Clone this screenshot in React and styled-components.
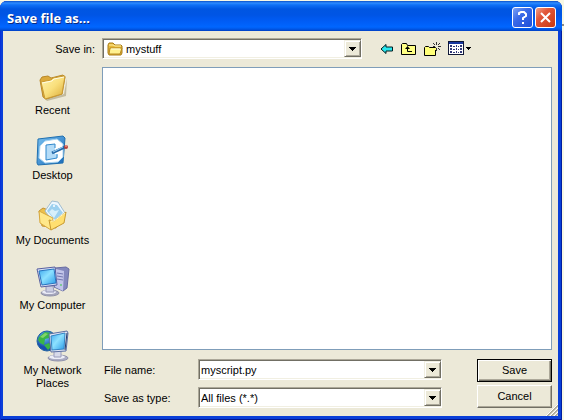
import React from "react";
import styled, { createGlobalStyle } from "styled-components";

const Global = createGlobalStyle`
  * { box-sizing: border-box; }
  body {
    margin: 0;
    background: #f8f8e4;
    font: 11px/13px "Liberation Sans", Arial, sans-serif;
    color: #000;
  }
  button, input, select { font: inherit; color: inherit; }
  svg { display: block; flex: none; }
`;

const Page = styled.div`
  display: flex;
  min-height: 100vh;
  padding: 1px 2px 0 0;
  background: linear-gradient(#f8f8e4 24px, #8c8c84 24px, #8c8c84 26px, #f8f8e4 26px);
`;

const Dialog = styled.main`
  flex: 1;
  display: flex;
  flex-direction: column;
  border-radius: 7px 7px 0 0;
  background: #0a3fd8;
  box-shadow: inset 1px 0 #0831d9, inset -1px 0 #001ea0, inset 0 -1px #001590;
  overflow: hidden;
`;

const TitleBar = styled.header`
  display: flex;
  align-items: center;
  gap: 2px;
  height: 30px;
  padding: 2px 6px 0 7px;
  background: linear-gradient(
    #0a50c8 0, #2e8cff 2px, #0f70f5 4px, #0056e2 8px,
    #0055e5 14px, #005cf5 20px, #0066ff 26px, #0058e8 28px, #003fc4 30px
  );
`;

const Title = styled.h1`
  flex: 1;
  margin: 0;
  padding-top: 2px;
  font: bold 13px/18px "Open Sans", "Noto Sans", sans-serif;
  color: #fff;
  text-shadow: 1px 1px #0a2a80;
`;

const CaptionButton = styled.button`
  display: grid;
  place-items: center;
  width: 21px;
  height: 21px;
  padding: 0;
  border: 1px solid #fff;
  border-radius: 3px;
  background: ${(p) =>
    p.$close
      ? "linear-gradient(135deg, #f0a088, #e2583a 35%, #c83810)"
      : "linear-gradient(135deg, #7ba2f5, #3a6ae8 40%, #1e4fd8)"};
`;

const Client = styled.form`
  flex: 1;
  display: grid;
  grid-template-columns: 99px minmax(0, 1fr);
  grid-template-rows: 21px 1fr;
  row-gap: 8px;
  margin: 0 4px 4px 3px;
  padding: 7px 0 0;
  background: #ece9d8;
`;

const LookInLabel = styled.label`
  padding: 5px 7px 0 0;
  text-align: right;
`;

const TopRow = styled.div`
  display: flex;
  align-items: center;
  gap: 18px;
  padding-right: 6px;
`;

const Combo = styled.div`
  flex: ${(p) => (p.$look ? "0 1 260px" : "1")};
  display: flex;
  align-items: center;
  min-width: 0;
  height: 21px;
  padding-left: ${(p) => (p.$look ? "4px" : "2px")};
  background: #fff;
  border: 1px solid;
  border-color: #aca899 #fff #fff #aca899;
  box-shadow: inset 1px 1px #716f64, inset -1px -1px #f1efe2;
`;

const comboField = `
  flex: 1;
  min-width: 0;
  height: 17px;
  padding: 1px 0 0;
  border: 0;
  outline: 0;
  background: transparent;
  appearance: none;
`;

const ComboSelect = styled.select`
  ${comboField}
  padding-left: ${(p) => (p.$icon ? "3px" : "0")};
`;
const ComboInput = styled.input`${comboField}`;

const DropButton = styled.button`
  display: grid;
  place-items: center;
  width: 17px;
  height: 17px;
  padding: 0;
  background: #ece9d8;
  border: 1px solid;
  border-color: #f1efe2 #716f64 #716f64 #f1efe2;
  box-shadow: inset 1px 1px #fff, inset -1px -1px #aca899;
`;

const Tools = styled.div`
  display: flex;
  align-items: center;
  gap: 7px;
`;

const ToolButton = styled.button`
  display: flex;
  padding: 0;
  border: 0;
  background: none;
`;

const Places = styled.nav`
  display: flex;
  flex-direction: column;
  gap: 2px;
`;

const Place = styled.a`
  display: flex;
  flex-direction: column;
  align-items: center;
  gap: 2px;
  min-height: 63px;
  padding-top: 3px;
  color: inherit;
  text-align: center;
  text-decoration: none;
`;

const PlaceName = styled.span`
  width: 78px;
`;

const Main = styled.div`
  display: flex;
  flex-direction: column;
  gap: 9px;
  padding-right: 6px;
`;

const FileList = styled.section`
  flex: 1;
  min-height: 120px;
  background: #fff;
  border: 1px solid #7f9db9;
`;

const Footer = styled.div`
  display: grid;
  grid-template-columns: 1fr 75px;
  column-gap: 35px;
  padding-bottom: 8px;
`;

const Fields = styled.div`
  display: flex;
  flex-direction: column;
  gap: 7px;
`;

const Field = styled.div`
  display: flex;
  align-items: center;
`;

const FieldLabel = styled.label`
  width: 96px;
  padding: 2px 0 0 2px;
`;

const Actions = styled.div`
  display: flex;
  flex-direction: column;
  gap: 3px;
`;

const PushButton = styled.button`
  height: 23px;
  padding: 0;
  background: #ece9d8;
  border: 1px solid;
  border-color: ${(p) => (p.$primary ? "#000" : "#fff #716f64 #716f64 #fff")};
  box-shadow: ${(p) =>
    p.$primary
      ? "inset 1px 1px #fff, inset -1px -1px #716f64, inset -2px -2px #aca899"
      : "inset -1px -1px #aca899"};
`;

const Grip = styled.svg`
  position: fixed;
  right: 6px;
  bottom: 4px;
`;

const Arrow = () => (
  <svg width="7" height="4" shapeRendering="crispEdges" aria-hidden="true">
    <path d="M0 0h7v1H6v1H5v1H4v1H3V3H2V2H1V1H0z" />
  </svg>
);

const SmallFolder = () => (
  <svg width="16" height="14" viewBox="0 0 16 14" aria-hidden="true">
    <path d="M1 11V3l1-2h4l2 2h6l1 1v7l-1 2H2z" fill="#e8b838" stroke="#a87c18" />
    <path d="M2 3h4l2 1h6" stroke="#fff0a0" fill="none" />
    <path d="M3 6h12l-2 6H2z" fill="#fff18f" stroke="#b88a20" />
    <path d="M4 7h9" stroke="#fffde0" />
  </svg>
);

const BackIcon = () => (
  <svg width="14" height="12" viewBox="0 0 14 12" aria-hidden="true">
    <path d="M1 6l5-4.500V4h6.500v4H6v2.500z" fill="#28e8ee" stroke="#001c20" />
  </svg>
);

const UpIcon = () => (
  <svg width="16" height="14" viewBox="0 0 16 14" aria-hidden="true">
    <path d="M.5 12.500v-10l1-1h4l1 2h8v9z" fill="#ffff84" stroke="#000" />
    <path d="M6.500 6v3.500H11" stroke="#000" fill="none" />
    <path d="M4 7l2.500-3L9 7z" />
  </svg>
);

const NewFolderIcon = () => (
  <svg width="17" height="16" viewBox="0 0 17 16" aria-hidden="true">
    <path d="M.5 14.500v-8l1-1h3l1 1h6v8z" fill="#ffff78" stroke="#000" />
    <path d="M12.500 1v3M12.500 7v3M9 5.500h2M14 5.500h3M9 2l2 2M14 4l2-2M14 7l2 2" stroke="#333" />
    <path d="M10 7h2v2h-2z" fill="#ffff78" />
  </svg>
);

const ViewsIcon = () => (
  <svg width="24" height="15" viewBox="0 0 24 15" shapeRendering="crispEdges" aria-hidden="true">
    <path d="M0 0h16v14H0z" fill="#101838" />
    <path d="M1 3h14v10H1z" fill="#fff" />
    <path d="M1 1h14v2H1z" fill="#1838a0" />
    {[4, 7, 10].map((y) => (
      <path key={y} d={`M2 ${y}h2v2H2zM5 ${y + 1}h2v1H5zM8 ${y}h1v2H8zM10 ${y + 1}h1v1h-1zM12 ${y}h2v2h-2z`} fill="#303878" />
    ))}
    <path d="M18 6h5v1h-1v1h-1v1h-1V8h-1V7h-1z" />
  </svg>
);

const RecentIcon = () => (
  <svg width="34" height="32" viewBox="0 0 34 32" aria-hidden="true">
    <defs>
      <linearGradient id="gold" x2="1" y2="1">
        <stop stopColor="#fff4b0" /><stop offset=".5" stopColor="#f9df7c" /><stop offset="1" stopColor="#d9a834" />
      </linearGradient>
    </defs>
    <path d="M9 29l19-5 3-16-1 18-19 5z" fill="#a89c78" opacity=".6" />
    <path d="M4 10l2-3 6-1 3 2 12-3 2 2-3 17-16 5-3-2z" fill="#dca93a" stroke="#b98828" />
    <path d="M5 12l10-2 2-2 12-2-3 18-17 5z" fill="url(#gold)" stroke="#c99a34" />
    <path d="M6 13l10-2 2-2 10-2" stroke="#fffbe0" fill="none" />
  </svg>
);

const DesktopIcon = () => (
  <svg width="34" height="32" viewBox="0 0 34 32" aria-hidden="true">
    <defs>
      <linearGradient id="desk" x2="1" y2="1">
        <stop stopColor="#78c0f0" /><stop offset="1" stopColor="#1668b8" />
      </linearGradient>
    </defs>
    <path d="M2 4l25-3 2 2-2 25-25 2-1-2z" fill="url(#desk)" stroke="#2070b0" />
    <path d="M9 6l12-2 6 5v13l-5 5-13 1-6-5 1-12z" fill="#fff" stroke="#a8d4f0" />
    <path d="M10 10l9-1v10l3 1-1 3-11 2z" fill="#b4dcf8" />
    <path d="M19 13V9l-9 1v15l11-2v-4" fill="none" stroke="#3088cc" />
    <path d="M16 18l13-6" stroke="#2468a8" strokeWidth="3" />
    <path d="M17 17l10-5" stroke="#a1d5f8" />
    <circle cx="30" cy="12" r="2" fill="#b84038" />
    <circle cx="30" cy="11" r="1" fill="#f09080" />
  </svg>
);

const DocumentsIcon = () => (
  <svg width="34" height="32" viewBox="0 0 34 32" aria-hidden="true">
    <path d="M3 11l4-3 5 2 11 5-3 13-14-2z" fill="#ecc04c" stroke="#c49232" />
    <path d="M9 11l7-10 6 1 7 11-10 11z" fill="#edf7ff" stroke="#a0bdd0" />
    <path d="M11 11l5-7 5 1 6 8-8 7z" fill="#9cd0ef" />
    <path d="M13 12l3-3 3 2 4-1-5 8z" fill="#d7effa" />
    <circle cx="18" cy="6" r="1" fill="#fff" />
    <path d="M3 11l14 7-2 12-11-7z" fill="#ffe88a" stroke="#d6a840" />
    <path d="M13 20l5 1 12-9-2 11-13 7z" fill="#ffdf70" stroke="#c99a30" />
    <path d="M15 21h3l11-8" stroke="#fff8c8" fill="none" />
  </svg>
);

const ScreenGradient = () => (
  <defs>
    <linearGradient id="screen" x2="1" y2="1">
      <stop stopColor="#3da8ee" /><stop offset=".45" stopColor="#8de1ff" /><stop offset="1" stopColor="#299ae8" />
    </linearGradient>
    <radialGradient id="globe" cx=".4" cy=".3">
      <stop stopColor="#6ac6f5" /><stop offset="1" stopColor="#174eb0" />
    </radialGradient>
  </defs>
);

const ComputerIcon = () => (
  <svg width="34" height="32" viewBox="0 0 34 32" aria-hidden="true">
    <ScreenGradient />
    <path d="M19 3l11-1 3 2-2 19-4 3-9-4z" fill="#8388bd" stroke="#686da2" />
    <path d="M20 4l8 2-1 20-8-4z" fill="#c2c5ea" />
    <path d="M21 8l6 1M21 11l6 1M21 14l6 1" stroke="#7378b0" />
    <circle cx="25" cy="20" r="1" fill="#65c878" />
    <ellipse cx="14" cy="28" rx="9" ry="3" fill="#a5a6bc" stroke="#8f91a9" />
    <ellipse cx="13" cy="27" rx="7" ry="2" fill="#e9eaf6" />
    <path d="M10 21h7l1 6h-8z" fill="#cbcde2" stroke="#9698b8" />
    <path d="M1 4l18-2 2 18-16 2z" fill="#d9dff5" stroke="#5860a0" />
    <path d="M3 6l15-2 2 14-14 2z" fill="url(#screen)" stroke="#2874bf" />
  </svg>
);

const NetworkIcon = () => (
  <svg width="34" height="32" viewBox="0 0 34 32" aria-hidden="true">
    <circle cx="11" cy="11" r="10" fill="url(#globe)" stroke="#2264a2" />
    <path d="M3 7l6-5 7 1-3 5-4 1-1 6-4-2-2-3zM8 15l5-2 3 3-4 4z" fill="#39b548" />
    <path d="M4 7l5-4 3 1-5 4z" fill="#84d66a" />
    <ellipse cx="22" cy="28" rx="10" ry="3" fill="#acadc4" stroke="#9193ad" />
    <ellipse cx="21" cy="27" rx="8" ry="2" fill="#edeef8" />
    <path d="M18 20h7v7h-7z" fill="#d8daea" stroke="#9b9dbb" />
    <path d="M13 4l18-3 1 2-2 18-15 1z" fill="#e0e4f4" stroke="#5b6fa2" />
    <path d="M15 6l14-3-1 16-12 1z" fill="url(#screen)" stroke="#3284c4" />
    <path d="M31 3l-2 17" stroke="#263c68" />
  </svg>
);

const places = [
  { name: "Recent", Icon: RecentIcon },
  { name: "Desktop", Icon: DesktopIcon },
  { name: "My Documents", Icon: DocumentsIcon },
  { name: "My Computer", Icon: ComputerIcon },
  { name: "My Network Places", Icon: NetworkIcon },
];

const tools = [
  { name: "Back", Icon: BackIcon },
  { name: "Up one level", Icon: UpIcon },
  { name: "New folder", Icon: NewFolderIcon },
  { name: "Views", Icon: ViewsIcon },
];

export default function App() {
  return (
    <Page>
      <Global />
      <Dialog>
        <TitleBar>
          <Title>Save file as…</Title>
          <CaptionButton type="button" aria-label="Help">
            <svg width="13" height="15" viewBox="0 0 13 15">
              <path d="M3 5V3l2-1h3l2 2v2L7 8v2" fill="none" stroke="#fff" strokeWidth="2" />
              <path d="M6 12h2v2H6z" fill="#fff" />
            </svg>
          </CaptionButton>
          <CaptionButton type="button" aria-label="Close" $close>
            <svg width="13" height="13" viewBox="0 0 13 13">
              <path d="M2 2l9 9M11 2l-9 9" stroke="#fff" strokeWidth="2" />
            </svg>
          </CaptionButton>
        </TitleBar>
        <Client onSubmit={(e) => e.preventDefault()}>
          <LookInLabel htmlFor="folder">Save in:</LookInLabel>
          <TopRow>
            <Combo $look>
              <SmallFolder />
              <ComboSelect id="folder" $icon>
                <option>mystuff</option>
              </ComboSelect>
              <DropButton type="button" tabIndex={-1} aria-label="Show folders"><Arrow /></DropButton>
            </Combo>
            <Tools>
              {tools.map(({ name, Icon }) => (
                <ToolButton key={name} type="button" aria-label={name}><Icon /></ToolButton>
              ))}
            </Tools>
          </TopRow>
          <Places>
            {places.map(({ name, Icon }) => (
              <Place key={name} href="#">
                <Icon />
                <PlaceName>{name}</PlaceName>
              </Place>
            ))}
          </Places>
          <Main>
            <FileList aria-label="Files" />
            <Footer>
              <Fields>
                <Field>
                  <FieldLabel htmlFor="filename">File name:</FieldLabel>
                  <Combo>
                    <ComboInput id="filename" defaultValue="myscript.py" />
                    <DropButton type="button" aria-label="Show recent names"><Arrow /></DropButton>
                  </Combo>
                </Field>
                <Field>
                  <FieldLabel htmlFor="filetype">Save as type:</FieldLabel>
                  <Combo>
                    <ComboSelect id="filetype"><option>All files (*.*)</option></ComboSelect>
                    <DropButton type="button" tabIndex={-1} aria-label="Show file types"><Arrow /></DropButton>
                  </Combo>
                </Field>
              </Fields>
              <Actions>
                <PushButton type="submit" $primary>Save</PushButton>
                <PushButton type="button">Cancel</PushButton>
              </Actions>
            </Footer>
          </Main>
        </Client>
      </Dialog>
      <Grip width="12" height="12" viewBox="0 0 12 12" aria-hidden="true">
        <path d="M1 12L12 1M5 12l7-7M9 12l3-3" stroke="#aca899" strokeWidth="2" />
        <path d="M0 12L12 0M4 12l8-8M8 12l4-4" stroke="#fff" />
      </Grip>
    </Page>
  );
}
